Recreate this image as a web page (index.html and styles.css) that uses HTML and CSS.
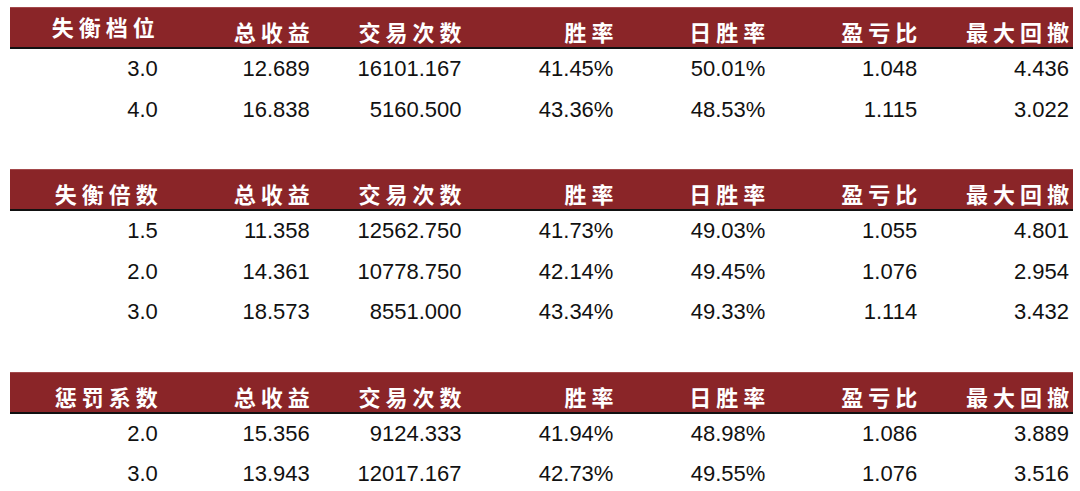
FILE: index.html
```html
<!DOCTYPE html>
<html lang="zh">
<head>
<meta charset="utf-8">
<title>参数对比</title>
<link rel="stylesheet" href="styles.css">
</head>
<body>
<div class="page">
  <div class="tbl">
    <div class="hd hd-first"><span>失衡档位</span></div>
    <div class="hd"><span>总收益</span></div>
    <div class="hd"><span>交易次数</span></div>
    <div class="hd"><span>胜率</span></div>
    <div class="hd"><span>日胜率</span></div>
    <div class="hd"><span>盈亏比</span></div>
    <div class="hd"><span>最大回撤</span></div>

    <div class="c">3.0</div><div class="c">12.689</div><div class="c">16101.167</div><div class="c">41.45%</div><div class="c">50.01%</div><div class="c">1.048</div><div class="c">4.436</div>
    <div class="c">4.0</div><div class="c">16.838</div><div class="c">5160.500</div><div class="c">43.36%</div><div class="c">48.53%</div><div class="c">1.115</div><div class="c">3.022</div>
  </div>

  <div class="tbl">
    <div class="hd"><span>失衡倍数</span></div>
    <div class="hd"><span>总收益</span></div>
    <div class="hd"><span>交易次数</span></div>
    <div class="hd"><span>胜率</span></div>
    <div class="hd"><span>日胜率</span></div>
    <div class="hd"><span>盈亏比</span></div>
    <div class="hd"><span>最大回撤</span></div>

    <div class="c">1.5</div><div class="c">11.358</div><div class="c">12562.750</div><div class="c">41.73%</div><div class="c">49.03%</div><div class="c">1.055</div><div class="c">4.801</div>
    <div class="c">2.0</div><div class="c">14.361</div><div class="c">10778.750</div><div class="c">42.14%</div><div class="c">49.45%</div><div class="c">1.076</div><div class="c">2.954</div>
    <div class="c">3.0</div><div class="c">18.573</div><div class="c">8551.000</div><div class="c">43.34%</div><div class="c">49.33%</div><div class="c">1.114</div><div class="c">3.432</div>
  </div>

  <div class="tbl">
    <div class="hd"><span>惩罚系数</span></div>
    <div class="hd"><span>总收益</span></div>
    <div class="hd"><span>交易次数</span></div>
    <div class="hd"><span>胜率</span></div>
    <div class="hd"><span>日胜率</span></div>
    <div class="hd"><span>盈亏比</span></div>
    <div class="hd"><span>最大回撤</span></div>

    <div class="c">2.0</div><div class="c">15.356</div><div class="c">9124.333</div><div class="c">41.94%</div><div class="c">48.98%</div><div class="c">1.086</div><div class="c">3.889</div>
    <div class="c">3.0</div><div class="c">13.943</div><div class="c">12017.167</div><div class="c">42.73%</div><div class="c">49.55%</div><div class="c">1.076</div><div class="c">3.516</div>
  </div>
</div>
</body>
</html>
```

FILE: styles.css
```css
html, body {
  margin: 0;
  padding: 0;
  background: #ffffff;
}

.page {
  width: 1063px;
  margin: 7px 0 0 10px;
  display: flex;
  flex-direction: column;
  gap: 39px;
}

.tbl {
  display: grid;
  grid-template-columns: repeat(7, 1fr);
  grid-auto-rows: 40.5px;
  grid-template-rows: 42px;
}

.hd {
  background: #8a2528;
  border-top: 1px solid #a3494b;
  border-bottom: 2px solid #111111;
  box-sizing: border-box;
  color: #ffffff;
  font-family: "Noto Sans CJK SC", "Noto Sans", sans-serif;
  font-weight: 700;
  font-size: 22px;
  line-height: 28px;
  letter-spacing: 5px;
  text-align: right;
  padding: 9px 4px 0 0;
}

.hd span {
  margin-right: -5px;
}

.hd-first {
  padding-top: 4px;
}

.hd-first span {
  margin-right: -2px;
}

.c {
  font-family: "Liberation Sans", Arial, sans-serif;
  font-size: 22px;
  line-height: 40.5px;
  color: #111111;
  text-align: right;
  padding-right: 4px;
}
```
